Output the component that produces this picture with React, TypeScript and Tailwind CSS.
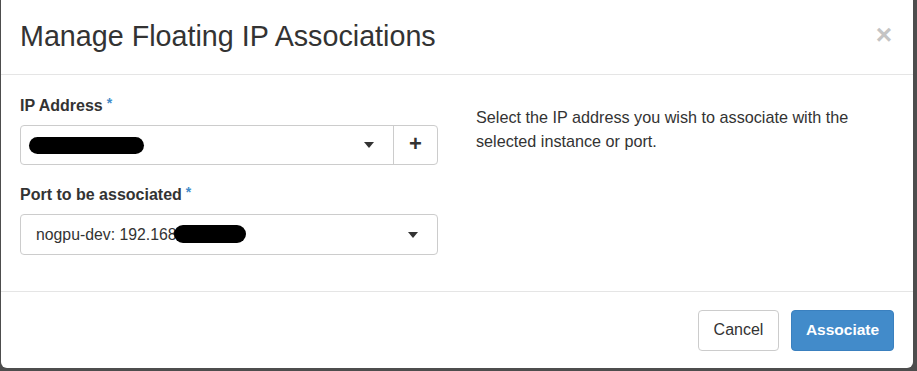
function Caret() {
  return (
    <svg width="10" height="6" viewBox="0 0 10 6" className="shrink-0">
      <path d="M0 0h10L5 6z" fill="#333" />
    </svg>
  )
}

function Label({ text }: { text: string }) {
  return (
    <label className="flex items-start text-[16px] font-bold text-[#333] leading-[20px] mb-[9px]">
      {text}
      <span className="ml-[4px] -mt-[3px] text-[14px] text-[#428bca]">*</span>
    </label>
  )
}

export default function App() {
  return (
    <div className="w-[917px] h-[371px] bg-[#4d4d4d] pl-px overflow-hidden font-['Liberation_Sans',Arial,sans-serif]">
      <div className="w-[912px] h-[368px] bg-white rounded-b-[6px] flex flex-col">
        {/* header */}
        <div className="h-[75px] border-b border-[#e5e5e5] flex items-center justify-between pl-[19px] pr-[21px] shrink-0">
          <h4 className="text-[28.7px] text-[#333] leading-none -mt-[2px]">Manage Floating IP Associations</h4>
          <span className="text-[#c4c4c4] text-[28px] font-bold leading-none -mt-[4px]">×</span>
        </div>

        {/* body */}
        <div className="flex-1 flex pt-[21px] pl-[19px]">
          <div className="w-[418px]">
            <Label text="IP Address" />
            <div className="h-[40px] border border-[#ccc] rounded-[4px] flex">
              <div className="flex-1 flex items-center pl-[8px] pr-[19px]">
                <div className="w-[115px] h-[17px] bg-black rounded-full" />
                <div className="flex-1" />
                <Caret />
              </div>
              <div className="w-[44px] border-l border-[#ccc] flex items-center justify-center">
                <span className="text-[22px] font-bold text-[#333] leading-none -mt-[2px]">+</span>
              </div>
            </div>

            <div className="mt-[20px]">
              <Label text="Port to be associated" />
              <div className="h-[41px] border border-[#ccc] rounded-[4px] flex items-center pl-[15px] pr-[19px]">
                <span className="text-[15.8px] text-[#333]">nogpu-dev: 192.168</span>
                <div className="w-[72px] h-[18px] bg-black rounded-full -ml-[3px] -mt-[2px]" />
                <div className="flex-1" />
                <Caret />
              </div>
            </div>
          </div>

          <div className="pl-[38px] pt-[9px] w-[420px] text-[16.2px] leading-[24px] text-[#333]">
            Select the IP address you wish to associate with the selected instance or port.
          </div>
        </div>

        {/* footer */}
        <div className="h-[77px] border-t border-[#e5e5e5] flex items-center justify-end gap-[12px] pr-[19px] shrink-0">
          <button className="w-[81px] h-[41px] border border-[#ccc] rounded-[4px] bg-white text-[16px] text-[#333]">
            Cancel
          </button>
          <button className="w-[103px] h-[41px] border border-[#3a80bf] rounded-[4px] bg-[#428bca] text-[15.5px] font-bold text-white">
            Associate
          </button>
        </div>
      </div>
    </div>
  )
}
